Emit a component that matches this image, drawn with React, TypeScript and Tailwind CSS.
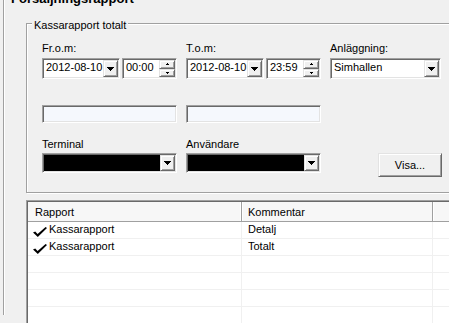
const sunken =
  "border border-t-[#a0a0a0] border-l-[#a0a0a0] border-r-white border-b-white shadow-[inset_1px_1px_0_#696969,inset_-1px_-1px_0_#e3e3e3] p-[1px]";
const raised =
  "bg-[#f0f0f0] border border-t-[#e3e3e3] border-l-[#e3e3e3] border-r-[#696969] border-b-[#696969] shadow-[inset_1px_1px_0_#fff,inset_-1px_-1px_0_#a0a0a0]";

const Arrow = () => (
  <svg width="7" height="4" viewBox="0 0 7 4" shapeRendering="crispEdges">
    <path d="M0 0h7v1h-1v1h-1v1h-1v1h-1v-1h-1v-1h-1v-1h-1z" fill="#000" />
  </svg>
);

const DropBtn = () => (
  <div className={`${raised} w-[15px] h-full flex items-center justify-center`}>
    <Arrow />
  </div>
);

const Spin = () => (
  <div className="flex flex-col w-[16px] h-full">
    <div className={`${raised} flex-1 flex items-center justify-center`}>
      <svg width="3" height="2" viewBox="0 0 3 2" shapeRendering="crispEdges">
        <path d="M1 0h1v1h1v1h-3v-1h1z" fill="#000" />
      </svg>
    </div>
    <div className={`${raised} flex-1 flex items-center justify-center`}>
      <svg width="3" height="2" viewBox="0 0 3 2" shapeRendering="crispEdges">
        <path d="M0 0h3v1h-1v1h-1v-1h-1z" fill="#000" />
      </svg>
    </div>
  </div>
);

const DateTime = ({ date, time }: { date: string; time: string }) => (
  <div className="flex gap-[2px] mt-[3px] h-[21px]">
    <div className={`${sunken} bg-white flex w-[78px]`}>
      <span className="flex-1 pl-[2px] leading-[15px]">{date}</span>
      <DropBtn />
    </div>
    <div className={`${sunken} bg-white flex w-[55px]`}>
      <span className="flex-1 pl-[2px] leading-[15px]">{time}</span>
      <Spin />
    </div>
  </div>
);

const BlankBox = () => (
  <div className={`${sunken} bg-[#f5f8fd] mt-[26px] h-[18px] w-[135px]`} />
);

const BlackCombo = () => (
  <div className={`${sunken} bg-black flex justify-end mt-[2px] h-[20px] w-[135px]`}>
    <DropBtn />
  </div>
);

const Check = () => (
  <svg width="14" height="10" viewBox="0 0 14 10" className="mt-[4px] shrink-0">
    <path d="M0 5.6 L2.2 4.4 L4.6 7 L12.6 0 L14 0.9 L4.8 10 Z" fill="#000" />
  </svg>
);

const rows = [
  { rapport: "Kassarapport", kommentar: "Detalj" },
  { rapport: "Kassarapport", kommentar: "Totalt" },
  null,
  null,
  null,
  null,
];

export default function App() {
  return (
    <div className="w-[449px] h-[323px] overflow-hidden bg-[#f0f0f0] pl-[3px] text-[11px] leading-[13px] text-black font-['Liberation_Sans',Arial,sans-serif]">
      <div className="h-full border-l border-[#a0a0a0] shadow-[inset_1px_0_0_#fff]">
        <div className="-mt-[8px] ml-[7px] font-bold text-[13px] leading-[13px]">
          Försäljningsrapport
        </div>

        <div className="ml-[22px] mt-[18px] w-[440px] h-[170px] border border-[#a0a0a0] shadow-[inset_1px_1px_0_#fff,1px_1px_0_#fff]">
          <div className="-mt-[5px] ml-[5px] h-[13px]">
            <span className="bg-[#f0f0f0] px-[2px]">Kassarapport totalt</span>
          </div>

          <div className="ml-[15px] mt-[10px] flex gap-x-[9px]">
            <div className="flex flex-col w-[135px]">
              <span>Fr.o.m:</span>
              <DateTime date="2012-08-10" time="00:00" />
              <BlankBox />
              <span className="mt-[15px]">Terminal</span>
              <BlackCombo />
            </div>
            <div className="flex flex-col w-[135px]">
              <span>T.o.m:</span>
              <DateTime date="2012-08-10" time="23:59" />
              <BlankBox />
              <span className="mt-[15px]">Användare</span>
              <BlackCombo />
            </div>
            <div className="flex flex-col w-[111px]">
              <span>Anläggning:</span>
              <div className={`${sunken} bg-white flex mt-[3px] h-[21px]`}>
                <span className="flex-1 pl-[2px] leading-[15px]">Simhallen</span>
                <DropBtn />
              </div>
              <button
                className={`${raised} ml-[48px] mt-[74px] w-[64px] h-[24px] flex items-center justify-center`}
              >
                Visa...
              </button>
            </div>
          </div>
        </div>

        <div className={`${sunken} ml-[22px] mt-[7px] w-[440px] h-[140px] bg-white`}>
          <div className="flex h-[20px] bg-[#f7f7f7] border-b border-[#a0a0a0]">
            <div className="w-[214px] pl-[7px] pt-[4px] border-r border-[#a0a0a0] shadow-[inset_-1px_0_0_#fff]">
              Rapport
            </div>
            <div className="w-[191px] pl-[6px] pt-[4px] border-r border-[#a0a0a0] shadow-[inset_1px_0_0_#fff]">
              Kommentar
            </div>
            <div className="flex-1 shadow-[inset_1px_0_0_#fff]" />
          </div>
          {rows.map((r, i) => (
            <div key={i} className="flex h-[17px] border-b border-[#f0f0f0]">
              <div className="w-[214px] flex gap-[2px] pl-[5px] pt-[1px] border-r border-[#f0f0f0]">
                {r && (
                  <>
                    <Check />
                    <span>{r.rapport}</span>
                  </>
                )}
              </div>
              <div className="w-[191px] pl-[6px] pt-[1px] border-r border-[#f0f0f0]">
                {r?.kommentar}
              </div>
              <div className="flex-1" />
            </div>
          ))}
        </div>
      </div>
    </div>
  );
}
